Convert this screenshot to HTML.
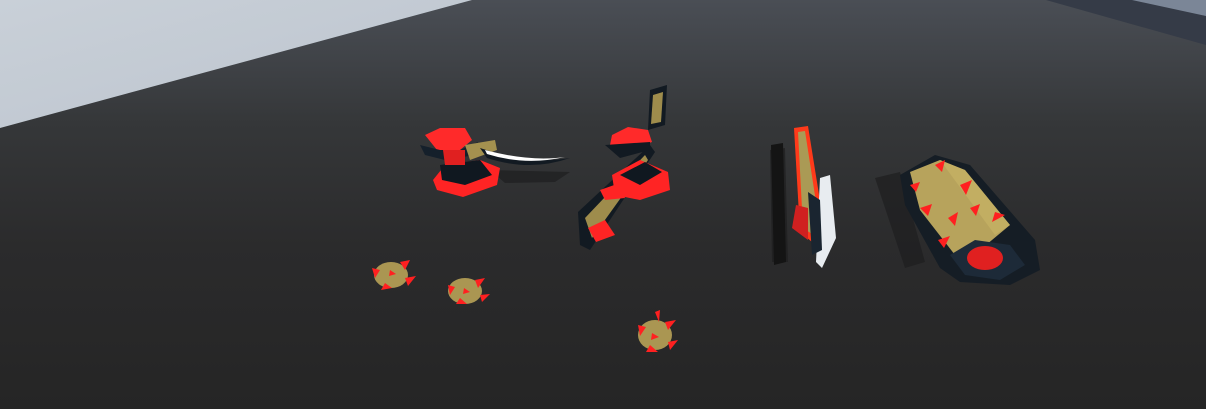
<!DOCTYPE html>
<html><head><style>html,body{margin:0;padding:0;width:1206px;height:409px;overflow:hidden;background:#2a2a2a}</style></head>
<body>
<svg width="1206" height="409" viewBox="0 0 1206 409" xmlns="http://www.w3.org/2000/svg">
<defs>
<linearGradient id="fl" x1="0" y1="0" x2="0" y2="1">
<stop offset="0" stop-color="#4a4e55"/>
<stop offset="0.3" stop-color="#353739"/>
<stop offset="0.6" stop-color="#2b2b2c"/>
<stop offset="1" stop-color="#252525"/>
</linearGradient>
<linearGradient id="sky" x1="0" y1="0" x2="1" y2="1">
<stop offset="0" stop-color="#c9d0d8"/><stop offset="1" stop-color="#bcc4ce"/>
</linearGradient>
</defs>
<rect width="1206" height="409" fill="url(#fl)"/>
<polygon points="0,0 472,0 0,128" fill="url(#sky)"/>
<polygon points="1046,0 1206,0 1206,45" fill="#353b47"/>
<polygon points="1132,0 1206,0 1206,16" fill="#7b8697"/>
<!-- shadows -->
<g fill="#1e1e1f" opacity="0.7">
<polygon points="490,170 570,172 555,182 505,183"/>
<polygon points="770,150 785,148 788,262 772,262"/>
<polygon points="875,178 900,172 925,262 905,268"/>
</g>
<!-- axe left -->
<polygon points="433,180 445,165 480,160 500,168 497,185 463,197 437,190" fill="#ff2424"/>
<polygon points="440,165 480,160 492,175 465,185 442,180" fill="#101820"/>
<polygon points="425,135 440,128 465,128 472,140 460,150 437,150" fill="#ff2a2a"/>
<polygon points="420,145 440,150 460,150 478,142 475,155 445,160 425,155" fill="#15202b"/>
<polygon points="443,150 465,150 465,165 445,165" fill="#e02020"/>
<polygon points="465,145 495,140 497,150 470,160" fill="#a4914f"/>
<path d="M480,148 Q530,165 570,158 Q530,172 487,158 Z" fill="#121a22"/>
<path d="M485,150 Q530,162 565,157 Q525,166 487,154 Z" fill="#ffffff"/>
<!-- sword/axe 2 -->
<polygon points="578,212 650,145 655,152 590,250 580,245" fill="#121a22"/>
<polygon points="585,218 645,155 648,160 592,238" fill="#9e8c4c"/>
<polygon points="650,90 667,85 665,125 648,130" fill="#121a22"/>
<polygon points="653,95 663,92 661,122 651,124" fill="#9e8c4c"/>
<polygon points="612,135 628,127 648,130 652,142 630,150 610,145" fill="#ff2a2a"/>
<polygon points="605,145 650,142 650,150 620,158" fill="#121a22"/>
<polygon points="612,175 640,160 668,172 670,190 640,200 615,195" fill="#ff2424"/>
<polygon points="620,175 645,162 662,172 640,185" fill="#101820"/>
<polygon points="588,228 605,220 615,235 596,242" fill="#ff2424"/>
<polygon points="600,190 620,183 625,198 605,200" fill="#ff2424"/>
<!-- chainsaw -->
<polygon points="771,145 783,143 786,262 774,265" fill="#141414"/>
<polygon points="794,128 808,126 825,232 812,242 800,232" fill="#ff3a1a"/>
<polygon points="798,132 805,131 820,228 812,234 803,228" fill="#aa9a55"/>
<polygon points="820,178 830,175 836,238 822,268 816,262" fill="#e8ecf0"/>
<polygon points="796,205 808,208 808,240 792,228" fill="#d02020"/>
<polygon points="808,192 820,200 822,250 812,255" fill="#1a2530"/>
<!-- cylinder mace -->
<polygon points="900,175 935,155 970,165 1035,240 1040,270 1010,285 960,282 940,268 905,205" fill="#151d25"/>
<polygon points="910,172 940,160 965,170 1010,225 980,250 955,255 920,210" fill="#b7a35c"/>
<polygon points="940,160 965,170 1010,225 995,235" fill="#cab566" opacity="0.6"/>
<polygon points="950,255 975,240 1010,245 1025,265 1000,280 965,275" fill="#1d2a38"/>
<ellipse cx="985" cy="258" rx="18" ry="12" fill="#e02020"/>
<g fill="#ff2020">
<polygon points="935,165 945,160 942,172"/><polygon points="960,185 972,180 966,195"/>
<polygon points="995,212 1005,215 992,222"/><polygon points="920,208 932,204 928,216"/>
<polygon points="948,218 958,212 955,226"/><polygon points="938,240 950,236 944,248"/>
<polygon points="910,185 920,182 916,192"/><polygon points="970,208 980,204 976,216"/>
</g>
<!-- spiky balls -->
<g>
<ellipse cx="391" cy="275" rx="17" ry="13" fill="#aa9652"/>
<ellipse cx="465" cy="291" rx="17" ry="13" fill="#aa9652"/>
<ellipse cx="655" cy="335" rx="17" ry="15" fill="#aa9652"/>
</g>
<g fill="#ff2020">
<polygon points="372,268 380,270 375,278"/><polygon points="400,262 410,260 405,270"/><polygon points="385,283 392,288 381,290"/><polygon points="405,278 416,276 408,286"/><polygon points="390,270 396,274 389,276"/>
<polygon points="448,285 455,287 450,295"/><polygon points="475,280 485,278 478,288"/><polygon points="460,298 467,304 456,304"/><polygon points="480,295 490,294 482,302"/><polygon points="464,288 470,292 463,294"/>
<polygon points="638,325 646,327 640,336"/><polygon points="665,322 676,320 668,330"/><polygon points="650,345 658,352 646,352"/><polygon points="668,342 678,340 670,350"/><polygon points="652,333 659,337 651,340"/><polygon points="655,312 660,310 659,322"/>
</g>
</svg>
</body></html>
